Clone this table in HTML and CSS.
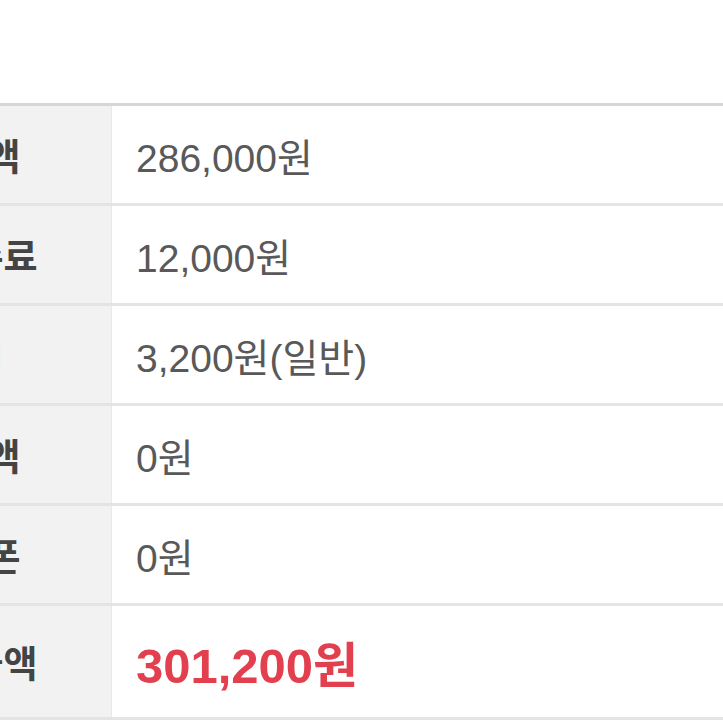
FILE: index.html
```html
<!DOCTYPE html>
<html lang="ko">
<head>
<meta charset="utf-8">
<link rel="stylesheet" href="styles.css">
</head>
<body>
<div class="summary">
  <div class="row"><div class="label"><span class="label-text">상품금액</span></div><div class="value">286,000원</div></div>
  <div class="row"><div class="label"><span class="label-text">결제수수료</span></div><div class="value">12,000원</div></div>
  <div class="row"><div class="label"><span class="label-text">배송비</span></div><div class="value">3,200원(일반)</div></div>
  <div class="row"><div class="label"><span class="label-text">할인금액</span></div><div class="value">0원</div></div>
  <div class="row"><div class="label"><span class="label-text">할인쿠폰</span></div><div class="value">0원</div></div>
  <div class="row total"><div class="label"><span class="label-text">총결제금액</span></div><div class="value">301,200원</div></div>
</div>
</body>
</html>
```
FILE: styles.css
```css
html, body {
  margin: 0;
  padding: 0;
  background: #ffffff;
  overflow: hidden;
}
body {
  width: 723px;
  height: 723px;
}
.summary {
  margin-top: 103px;
  margin-left: -206px;
  border-top: 3px solid #d6d6d6;
  font-family: "Liberation Sans", "Noto Sans CJK KR", sans-serif;
}
.row {
  display: grid;
  grid-template-columns: 318px 1fr;
  height: 97px;
  border-bottom: 3px solid #e4e4e4;
}
.row.total {
  height: 111px;
}
.label {
  background: #f2f2f2;
  border-right: 1px solid #e8e8e8;
  display: flex;
  align-items: center;
  justify-content: center;
}
.label-text {
  font-family: "Noto Sans CJK KR", "Noto Sans CJK SC", sans-serif;
  font-weight: 700;
  font-size: 37px;
  white-space: nowrap;
  color: #444444;
}
.value {
  display: flex;
  align-items: center;
  padding-left: 24px;
  font-size: 39px;
  color: #595959;
}
.total .value {
  font-size: 49px;
  font-weight: 700;
  color: #e2404f;
}
```
